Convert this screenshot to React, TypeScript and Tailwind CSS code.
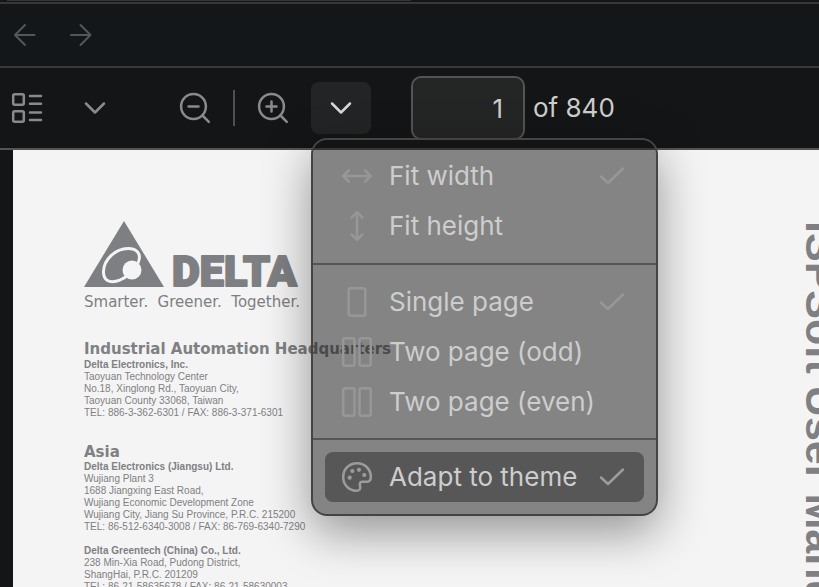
import type { ReactNode } from "react";

function Icon({ children, stroke = 2.5 }: { children: ReactNode; stroke?: number }) {
  return (
    <svg
      width="32"
      height="32"
      viewBox="0 0 32 32"
      fill="none"
      stroke="currentColor"
      strokeWidth={stroke}
      strokeLinecap="round"
      strokeLinejoin="round"
      className="block shrink-0"
      aria-hidden="true"
    >
      {children}
    </svg>
  );
}

const ArrowLeft = () => (
  <Icon stroke={2}>
    <path d="M26.500 16H7M17 6 7 16l10 10" />
  </Icon>
);
const ArrowRight = () => (
  <Icon stroke={2}>
    <path d="M7 16h19.500M16.500 6l10 10-10 10" />
  </Icon>
);
const Chevron = () => (
  <Icon>
    <path d="M7 11.5 16 20.500 25 11.500" />
  </Icon>
);
const Thumbnails = () => (
  <Icon>
    <rect x="2.200" y="2.200" width="10.600" height="10.600" rx="1.500" />
    <rect x="2.200" y="19.200" width="10.600" height="10.600" rx="1.500" />
    <path d="M19 4h11M19 11.700h11M19 20.500h11M19 28h11" />
  </Icon>
);
const ZoomOut = () => (
  <Icon>
    <circle cx="14.500" cy="14.500" r="12.400" />
    <path d="M23.500 23.500 29.800 29.800M9.500 14.500h10" />
  </Icon>
);
const ZoomIn = () => (
  <Icon>
    <circle cx="14.500" cy="14.500" r="12.400" />
    <path d="M23.500 23.500 29.800 29.800M9.500 14.500h10M14.500 9.500v10" />
  </Icon>
);
const FitWidth = () => (
  <Icon>
    <path d="M2.200 16h27.600M7.700 10.500 2.200 16l5.500 5.500M24.300 10.500l5.500 5.500-5.500 5.500" />
  </Icon>
);
const FitHeight = () => (
  <Icon>
    <path d="M16 2.200v27.600M10.500 7.700 16 2.200l5.500 5.500M10.500 24.300l5.500 5.500 5.500-5.500" />
  </Icon>
);
const SinglePage = () => (
  <Icon>
    <rect x="7.700" y="2.200" width="16.600" height="27.600" rx="2" />
  </Icon>
);
const TwoPages = () => (
  <Icon>
    <rect x="2.200" y="2.200" width="11.300" height="27.600" rx="2" />
    <rect x="18.500" y="2.200" width="11.300" height="27.600" rx="2" />
  </Icon>
);
const Palette = () => (
  <Icon>
    <path d="M16 2.200C8.200 2.200 2.200 8.200 2.200 16c0 7.500 5.300 13.800 13.300 13.800 2.700 0 4-1.500 3.700-3.800l-.4-2.200c-.3-1.800.8-3 2.600-3h4c2.800 0 4.400-2 4.400-4.900C29.800 7.700 23.400 2.200 16 2.200Z" />
    <g fill="currentColor" stroke="none">
      <circle cx="8.700" cy="16.700" r="2.100" />
      <circle cx="11.300" cy="10" r="2.100" />
      <circle cx="18" cy="8.800" r="2.100" />
      <circle cx="23.300" cy="14" r="2.100" />
    </g>
  </Icon>
);
const Check = () => (
  <Icon>
    <path d="M5 16.500l7 6.500L27 8.500" />
  </Icon>
);

function ToolButton({ label, children, active = false }: { label: string; children: ReactNode; active?: boolean }) {
  return (
    <button
      type="button"
      aria-label={label}
      className={`flex h-[52px] w-[60px] items-center justify-center rounded-lg ${
        active ? "bg-[#232425] text-[#d6d6d6]" : "text-[#8a8a8a]"
      }`}
    >
      {children}
    </button>
  );
}

function MenuItem({
  icon,
  label,
  checked = false,
  selected = false,
}: {
  icon: ReactNode;
  label: string;
  checked?: boolean;
  selected?: boolean;
}) {
  return (
    <button
      type="button"
      role="menuitemradio"
      aria-checked={checked}
      className={`flex h-[50px] w-full items-center gap-4 rounded-lg px-4 text-left ${
        selected ? "bg-[#575757] text-[#9c9c9c]" : "text-[#979797]"
      }`}
    >
      {icon}
      <span className="flex-1 whitespace-nowrap text-[#cdcdcd]">{label}</span>
      {checked && <Check />}
    </button>
  );
}

function ViewMenu() {
  return (
    <div
      role="menu"
      className="absolute top-14 left-0 z-10 w-[347px] rounded-2xl border-2 border-[#444444] bg-[#131313]/50 text-[26px] leading-8 shadow-[0_16px_48px_rgba(0,0,0,0.4)]"
    >
      <div className="border-b-2 border-[#555555] px-3 pt-[11px] pb-3">
        <MenuItem icon={<FitWidth />} label="Fit width" checked />
        <MenuItem icon={<FitHeight />} label="Fit height" />
      </div>
      <div className="border-b-2 border-[#555555] px-3 pt-3 pb-[11px]">
        <MenuItem icon={<SinglePage />} label="Single page" checked />
        <MenuItem icon={<TwoPages />} label="Two page (odd)" />
        <MenuItem icon={<TwoPages />} label="Two page (even)" />
      </div>
      <div className="p-3">
        <MenuItem icon={<Palette />} label="Adapt to theme" checked selected />
      </div>
    </div>
  );
}

function DeltaLogo() {
  return (
    <div className="w-[216px] text-[#7e7f82]">
      <svg
        width="216"
        height="67"
        viewBox="0 0 216 67"
        className="block overflow-visible"
        role="img"
        aria-label="Delta"
      >
        <path d="M40 0 80 66H0Z" fill="currentColor" />
        <path
          d="M54 42C58 33 53 27.500 44 27.500C31 27.500 20 39 19.500 50C19 60 26 62 33 60C37 59 40 57 43 55"
          fill="none"
          stroke="#f4f4f4"
          strokeWidth="3"
        />
        <circle cx="48" cy="49" r="9.500" fill="#f4f4f4" />
        <text
          x="88"
          y="65"
          fill="currentColor"
          stroke="currentColor"
          strokeWidth="2"
          strokeLinejoin="round"
          className="font-['Roboto',sans-serif] text-[43px] font-black"
        >
          DELTA
        </text>
      </svg>
      <p className="mt-1 flex justify-between font-['DejaVu_Sans',sans-serif] text-[15px] leading-5">
        <span>Smarter.</span>
        <span>Greener.</span>
        <span>Together.</span>
      </p>
    </div>
  );
}

function Address({ name, lines }: { name: string; lines: string[] }) {
  return (
    <address className="text-[10px] leading-3 whitespace-nowrap not-italic">
      <strong className="block">{name}</strong>
      {lines.map((line) => (
        <span key={line} className="block">
          {line}
        </span>
      ))}
    </address>
  );
}

function DocumentPage() {
  return (
    <article className="flex min-w-0 flex-1 justify-between overflow-hidden bg-[#f4f4f4] pt-[71px] pl-[71px] font-['Liberation_Sans',sans-serif] text-[#7f8083]">
      <div>
        <DeltaLogo />
        <h2 className="mt-[27px] font-['DejaVu_Sans',sans-serif] text-[15px] leading-5 font-bold whitespace-nowrap">
          Industrial Automation Headquarters
        </h2>
        <Address
          name="Delta Electronics, Inc."
          lines={[
            "Taoyuan Technology Center",
            "No.18, Xinglong Rd., Taoyuan City,",
            "Taoyuan County 33068, Taiwan",
            "TEL: 886-3-362-6301 / FAX: 886-3-371-6301",
          ]}
        />
        <h2 className="mt-6 font-['DejaVu_Sans',sans-serif] text-[15px] leading-[18px] font-bold">Asia</h2>
        <Address
          name="Delta Electronics (Jiangsu) Ltd."
          lines={[
            "Wujiang Plant 3",
            "1688 Jiangxing East Road,",
            "Wujiang Economic Development Zone",
            "Wujiang City, Jiang Su Province, P.R.C. 215200",
            "TEL: 86-512-6340-3008 / FAX: 86-769-6340-7290",
          ]}
        />
        <div className="h-3" />
        <Address
          name="Delta Greentech (China) Co., Ltd."
          lines={[
            "238 Min-Xia Road, Pudong District,",
            "ShangHai, P.R.C. 201209",
            "TEL: 86-21-58635678 / FAX: 86-21-58630003",
          ]}
        />
      </div>
      <div className="w-5 shrink-0">
        <h1 className="w-11 text-[43px] leading-[44px] font-bold whitespace-nowrap [writing-mode:vertical-rl]">
          ISPSoft User Manual
        </h1>
      </div>
    </article>
  );
}

export default function App() {
  return (
    <div className="flex h-screen flex-col overflow-hidden bg-[#141517] font-['Inter',sans-serif] text-[#cdcdcd]">
      <div className="h-1 shrink-0 border-b-2 border-[#383838] pl-[7px]">
        <div className="h-px w-[404px] bg-[#363636]" />
      </div>
      <nav className="flex h-16 shrink-0 items-center gap-6 border-b-2 border-[#383838] bg-[#14171a] px-2 text-[#555657]">
        <button type="button" aria-label="Back">
          <ArrowLeft />
        </button>
        <button type="button" aria-label="Forward">
          <ArrowRight />
        </button>
      </nav>
      <header className="relative z-10 flex h-[82px] shrink-0 items-center border-b-2 border-[#545454] bg-[#141516] pl-[11px] text-[26px] leading-8">
        <button type="button" aria-label="Thumbnails" className="mr-[22px] text-[#8a8a8a]">
          <Thumbnails />
        </button>
        <ToolButton label="Sidebar options">
          <Chevron />
        </ToolButton>
        <div className="ml-10 flex items-center gap-2">
          <ToolButton label="Zoom out">
            <ZoomOut />
          </ToolButton>
          <div className="h-9 w-[2px] bg-[#505050]" />
          <ToolButton label="Zoom in">
            <ZoomIn />
          </ToolButton>
          <div className="relative">
            <ToolButton label="View options" active>
              <Chevron />
            </ToolButton>
            <ViewMenu />
          </div>
        </div>
        <label className="ml-10 flex items-center gap-2 whitespace-nowrap">
          <input
            type="text"
            aria-label="Page number"
            defaultValue="1"
            className="h-16 w-[114px] rounded-[10px] border-2 border-[#545454] bg-[#242525] px-5 text-right"
          />
          of 840
        </label>
      </header>
      <main className="flex min-h-0 flex-1 pl-[13px]">
        <DocumentPage />
      </main>
    </div>
  );
}
